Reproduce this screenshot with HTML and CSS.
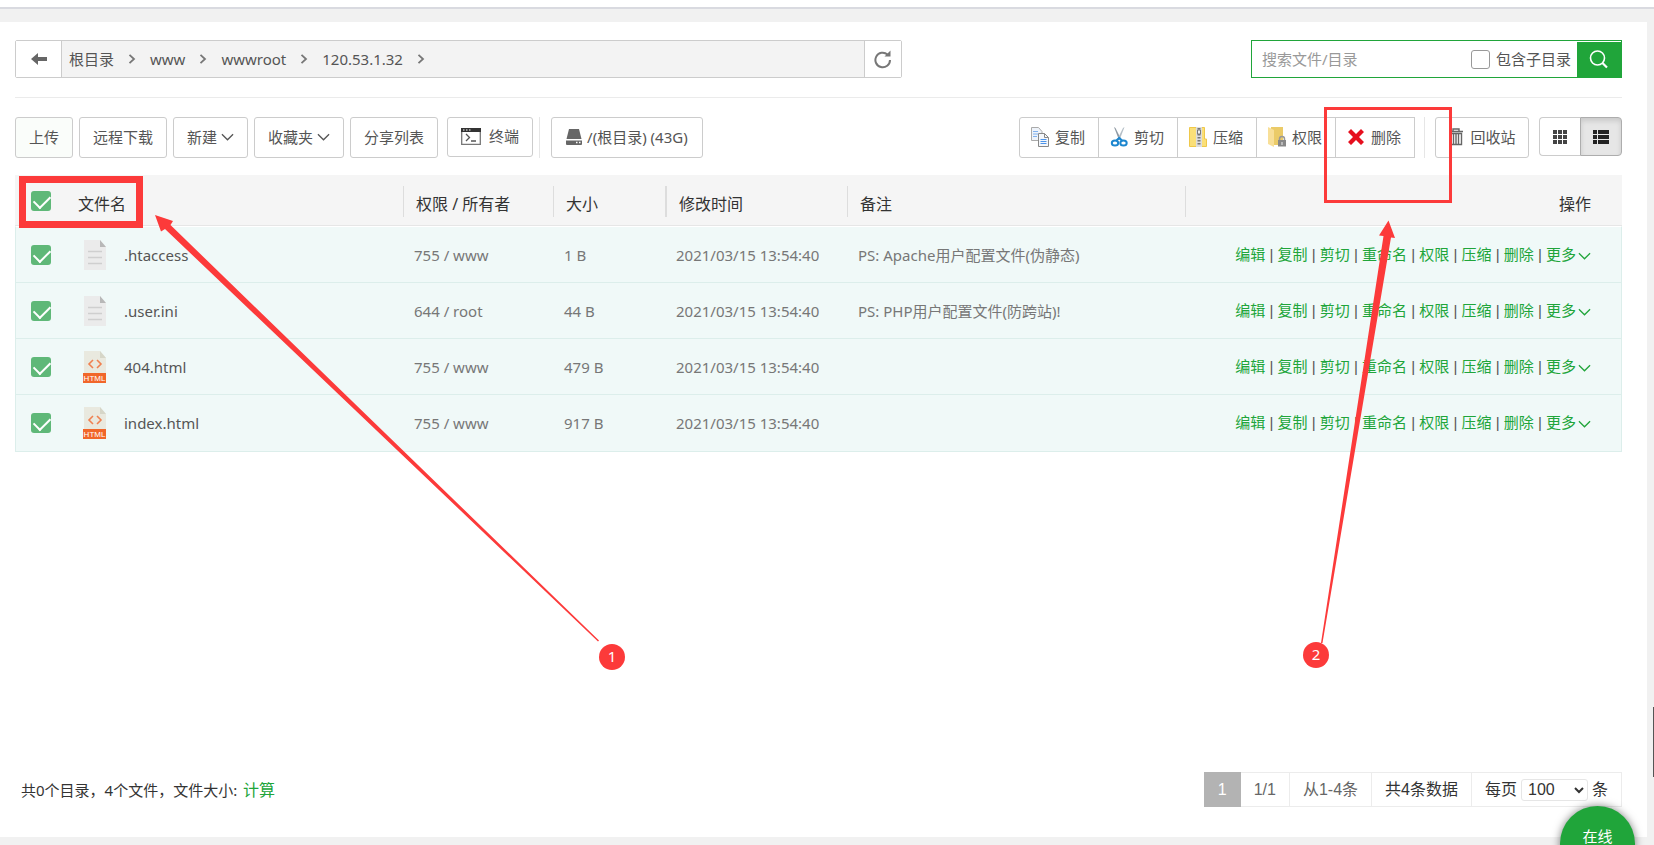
FILE: index.html
```html
<!DOCTYPE html>
<html lang="zh-CN">
<head>
<meta charset="utf-8">
<title>文件管理</title>
<link rel="stylesheet" href="styles.css">
</head>
<body>
<svg class="defs" aria-hidden="true">
  <symbol id="chev" viewBox="0 0 14 8"><path d="M1 1l6 6 6-6" fill="none" stroke="currentColor" stroke-width="1.4"/></symbol>
  <symbol id="sep" viewBox="0 0 8 10"><path d="M1.5 .8L6 5 1.500 9.200" fill="none" stroke="#777" stroke-width="1.8"/></symbol>
  <symbol id="doc" viewBox="0 0 24 32"><path d="M1 1h16l6 7v23H1z" fill="#ebebeb"/><path d="M17 1l6 7h-6z" fill="#b8b8b8"/><path d="M5 12.500h14M5 18.500h14M5 24.500h14" stroke="#cfcfcf" stroke-width="1.600"/></symbol>
  <symbol id="html" viewBox="0 0 24 32"><path d="M1 0h16l6 7v16H1z" fill="#e9e9df"/><path d="M17 0l6 7h-6z" fill="#d6d6c8"/><path d="M10 9l-4 4 4 4M14 9l4 4-4 4" fill="none" stroke="#f08050" stroke-width="1.600"/><path d="M0 22h23v10H0z" fill="#f1662a"/></symbol>
</svg>
<div class="topline"></div>
<main class="panel">
  <div class="pathrow">
    <nav class="crumbs" aria-label="路径">
      <button class="back" aria-label="返回"><svg width="16" height="12" viewBox="0 0 16 12"><path d="M0 6l7-6v4h9v4H7v4z" fill="#666"/></svg></button>
      <div class="trail">
        <a href="#">根目录</a><svg class="sep"><use href="#sep"/></svg>
        <a href="#">www</a><svg class="sep"><use href="#sep"/></svg>
        <a href="#">wwwroot</a><svg class="sep"><use href="#sep"/></svg>
        <a href="#">120.53.1.32</a><svg class="sep"><use href="#sep"/></svg>
      </div>
      <button class="refresh" aria-label="刷新"><svg width="18" height="19" viewBox="0 0 18 19"><path d="M16 10a7.300 7.300 0 1 1-2.500-5.500" fill="none" stroke="#777" stroke-width="2"/><path d="M16.500 .5v6h-6z" fill="#777"/></svg></button>
    </nav>
    <form class="search">
      <input class="query" type="text" placeholder="搜索文件/目录" aria-label="搜索文件/目录">
      <label class="sub"><input class="box" type="checkbox">包含子目录</label>
      <button class="go" type="button" aria-label="搜索"><svg width="20" height="20" viewBox="0 0 20 20"><circle cx="8.500" cy="8" r="7" fill="none" stroke="#fff" stroke-width="1.600"/><path d="M13.500 13l4.500 4.500" stroke="#fff" stroke-width="2.200"/></svg></button>
    </form>
  </div>
  <div class="toolbar">
    <button class="btn up">上传</button>
    <button class="btn">远程下载</button>
    <button class="btn">新建<svg class="chev"><use href="#chev"/></svg></button>
    <button class="btn">收藏夹<svg class="chev"><use href="#chev"/></svg></button>
    <button class="btn">分享列表</button>
    <button class="btn term"><svg width="20" height="17" viewBox="0 0 20 17"><path d="M.7.7h18.600v15.600H.7z" fill="#fff" stroke="#777" stroke-width="1.300"/><path d="M0 0h20v4H0z" fill="#333"/><path d="M2 2h1.500M5 2h1.500M8 2h1.500" stroke="#fff"/><path d="M5 6l3.500 3.500L5 13M10 13h5" fill="none" stroke="#555" stroke-width="1.300"/></svg>终端</button>
    <span class="rule"></span>
    <button class="btn disk"><svg width="16" height="16" viewBox="0 0 16 16"><path d="M3 0h10l2.500 10H.5z" fill="#666"/><path d="M0 11.500h16V15a1 1 0 0 1-1 1H1a1 1 0 0 1-1-1z" fill="#666"/><path d="M10 13.500h1.500M13 13.500h1.500" stroke="#fff" stroke-width="1.500"/></svg>/(根目录) (43G)</button>
    <div class="group">
      <button class="btn"><svg width="20" height="20" viewBox="0 0 20 20"><path d="M1.500.5h7l3.500 4v9H1.500z" fill="#eef3fa" stroke="#aaa"/><path d="M3 4.500h5M3 7h5M3 9.500h4" stroke="#7fb0ee"/><path d="M8.500 6.500h6l4 4v9h-10z" fill="#f4f7fb" stroke="#888"/><path d="M14.500 6.500v4h4" fill="none" stroke="#888"/><path d="M10.500 12.500h6M10.500 14.500h6M10.500 16.500h6" stroke="#4d94ea"/></svg>复制</button>
      <button class="btn"><svg width="20" height="20" viewBox="0 0 20 20"><path d="M5 0l1.500 1L12 12l-2 1z" fill="#8e99a3"/><path d="M15.500 0L14 1 8.500 12l2 1z" fill="#b4bec6"/><ellipse cx="6" cy="16" rx="3.200" ry="2.600" fill="none" stroke="#1c86cf" stroke-width="2"/><ellipse cx="14.500" cy="16" rx="3.200" ry="2.600" fill="none" stroke="#1c86cf" stroke-width="2"/><path d="M7.500 13.500l2.700-2.500 2.800 2.500" fill="none" stroke="#1c86cf" stroke-width="2.200"/></svg>剪切</button>
      <button class="btn"><svg width="20" height="20" viewBox="0 0 20 20"><path d="M1.500.5h15V12h2v7.500h-17z" fill="#fadf78" stroke="#efc84a"/><path d="M8 0h6v20H8z" fill="#ddd"/><path d="M11 1v18" stroke="#777" stroke-width="3" stroke-dasharray="1.500 1.500"/><path d="M9.500 3h3v4h-3z" fill="#eee" stroke="#777"/></svg>压缩</button>
      <button class="btn"><svg width="20" height="20" viewBox="0 0 20 20"><path d="M4 0h12v18H4z" fill="#ebcb68"/><path d="M1 0l6 3v17l-6-3z" fill="#f8df98"/><path d="M12.500 13v-1a2.500 2.500 0 0 1 5 0v1" fill="none" stroke="#999" stroke-width="1.500"/><path d="M11 13h8v6.500h-8z" fill="#888"/><path d="M14.500 15h1v3h-1z" fill="#eee"/></svg>权限</button>
      <button class="btn"><svg width="20" height="20" viewBox="0 0 20 20"><path d="M2 5l3-3 5 5 5-5 3 3-5 5 5 5-3 3-5-5-5 5-3-3 5-5z" fill="#e60f1e"/></svg>删除</button>
    </div>
    <span class="rule far"></span>
    <button class="btn bin"><svg width="16" height="18" viewBox="0 0 16 18"><path d="M1 3.500h14M5 3V1h6v2M2.500 5.500h11v11h-11zM5.500 6v10M8 6v10M10.500 6v10" fill="none" stroke="#666" stroke-width="1.400"/></svg>回收站</button>
    <div class="views">
      <button class="view" aria-label="图标视图"><svg width="14" height="14" viewBox="0 0 14 14"><path d="M0 2h14M0 7h14M0 12h14" stroke="#444" stroke-width="4" stroke-dasharray="4 1"/></svg></button>
      <button class="view on" aria-label="列表视图"><svg width="16" height="14" viewBox="0 0 16 14"><path d="M0 0h4v4H0zM5 0h11v4H5zM0 5h4v4H0zM5 5h11v4H5zM0 10h4v4H0zM5 10h11v4H5z" fill="#222"/></svg></button>
    </div>
  </div>
  <table class="files">
    <colgroup><col class="c-check"><col class="c-name"><col class="c-perm"><col class="c-size"><col class="c-time"><col class="c-note"><col></colgroup>
    <thead><tr>
      <th><input class="tick" type="checkbox" checked aria-label="全选"></th>
      <th class="fname"><span>文件名</span></th><th><span>权限 / 所有者</span></th><th><span>大小</span></th><th class="time"><span>修改时间</span></th><th><span>备注</span></th><th class="ops"><span>操作</span></th>
    </tr></thead>
    <tbody>
    <tr><td><input class="tick" type="checkbox" checked aria-label=".htaccess"></td><td class="name"><div class="file"><svg class="ico"><use href="#doc"/></svg>.htaccess</div></td><td>755 / www</td><td>1 B</td><td>2021/03/15 13:54:40</td><td>PS: Apache用户配置文件(伪静态)</td><td class="ops"><a href="#">编辑</a> | <a href="#">复制</a> | <a href="#">剪切</a> | <a href="#">重命名</a> | <a href="#">权限</a> | <a href="#">压缩</a> | <a href="#">删除</a> | <a href="#">更多<svg class="chev"><use href="#chev"/></svg></a></td></tr>
    <tr><td><input class="tick" type="checkbox" checked aria-label=".user.ini"></td><td class="name"><div class="file"><svg class="ico"><use href="#doc"/></svg>.user.ini</div></td><td>644 / root</td><td>44 B</td><td>2021/03/15 13:54:40</td><td>PS: PHP用户配置文件(防跨站)!</td><td class="ops"><a href="#">编辑</a> | <a href="#">复制</a> | <a href="#">剪切</a> | <a href="#">重命名</a> | <a href="#">权限</a> | <a href="#">压缩</a> | <a href="#">删除</a> | <a href="#">更多<svg class="chev"><use href="#chev"/></svg></a></td></tr>
    <tr><td><input class="tick" type="checkbox" checked aria-label="404.html"></td><td class="name"><div class="file"><svg class="ico" viewBox="0 0 24 32"><use href="#html"/><text class="tag" x="11.500" y="30">HTML</text></svg>404.html</div></td><td>755 / www</td><td>479 B</td><td>2021/03/15 13:54:40</td><td></td><td class="ops"><a href="#">编辑</a> | <a href="#">复制</a> | <a href="#">剪切</a> | <a href="#">重命名</a> | <a href="#">权限</a> | <a href="#">压缩</a> | <a href="#">删除</a> | <a href="#">更多<svg class="chev"><use href="#chev"/></svg></a></td></tr>
    <tr><td><input class="tick" type="checkbox" checked aria-label="index.html"></td><td class="name"><div class="file"><svg class="ico" viewBox="0 0 24 32"><use href="#html"/><text class="tag" x="11.500" y="30">HTML</text></svg>index.html</div></td><td>755 / www</td><td>917 B</td><td>2021/03/15 13:54:40</td><td></td><td class="ops"><a href="#">编辑</a> | <a href="#">复制</a> | <a href="#">剪切</a> | <a href="#">重命名</a> | <a href="#">权限</a> | <a href="#">压缩</a> | <a href="#">删除</a> | <a href="#">更多<svg class="chev"><use href="#chev"/></svg></a></td></tr>
    </tbody>
  </table>
  <footer class="foot">
    <div class="total">共0个目录，4个文件，文件大小: <a href="#">计算</a></div>
    <div class="pager">
      <span class="cur">1</span><span>1/1</span><span>从1-4条</span><span class="dark">共4条数据</span>
      <label class="dark">每页<select class="per"><option>100</option></select>条</label>
    </div>
  </footer>
</main>
<button class="online">在线</button>
<div class="thumb"></div>
<div class="mark m1"></div>
<div class="mark m2"></div>
<svg class="arrows" width="1654" height="845" viewBox="0 0 1654 845" aria-hidden="true"><g fill="#fc3a3a"><path d="M155 215l18 6-2.500 4L599 640.500l-1 1L165 229l-4 2.500z"/><path d="M1388.500 220.500l6.500 17.500-4-.5L1322.500 643h-1.500l62.500-407-4.500-.5z"/></g></svg>
<span class="num n1">1</span>
<span class="num n2">2</span>
</body>
</html>
```

FILE: styles.css
```css
* { box-sizing: border-box; }
body {
  position: relative;
  display: flex;
  flex-direction: column;
  min-height: 100vh;
  margin: 0;
  padding: 0 7px 8px 0;
  overflow: hidden;
  background: #f1f1f1;
  color: #333;
  font: 15px/20px "Noto Sans", "Noto Sans CJK SC", sans-serif;
}
button, input, select { font: inherit; color: inherit; }
button { cursor: pointer; }
a { color: #20a53a; text-decoration: none; }
.defs { position: absolute; width: 0; height: 0; }
.topline { height: 9px; margin: 0 -7px 13px 0; background: #fff; border-bottom: 2px solid #d9dae0; }
.panel { flex: 1; display: flex; flex-direction: column; padding: 18px 25px 30px 15px; background: #fff; }

.pathrow { display: flex; justify-content: space-between; padding-bottom: 19px; border-bottom: 1px solid #ebebeb; }
.crumbs { display: flex; width: 887px; height: 38px; border: 1px solid #ccc; border-radius: 2px; }
.back, .refresh { display: flex; align-items: center; justify-content: center; padding: 0; border: 0; background: #fff; }
.back { width: 46px; border-right: 1px solid #ccc; }
.refresh { width: 37px; border-left: 1px solid #ccc; }
.trail { flex: 1; display: flex; align-items: center; gap: 14px; padding-left: 7px; background: #f3f3f3; }
.trail a { color: #555; }
.sep { width: 8px; height: 10px; }
.search { display: flex; width: 371px; height: 38px; border: 1px solid #20a53a; }
.query { flex: 1; min-width: 0; padding: 0 10px; border: 0; background: none; outline: 0; }
.query::placeholder { color: #999; }
.sub { display: flex; align-items: center; gap: 6px; padding-right: 6px; color: #555; }
.box { appearance: none; width: 19px; height: 19px; margin: 0; border: 1px solid #999; border-radius: 3px; }
.go { width: 44px; margin-top: 1px; padding: 0; border: 0; background: #20a53a; }
.go svg { display: block; margin: auto; }

.toolbar { display: flex; gap: 6px; padding: 19px 0 17px; }
.btn { display: flex; align-items: center; justify-content: center; height: 41px; padding: 0 13px 2px; border: 1px solid #ccc; border-radius: 3px; background: #fff; color: #555; white-space: nowrap; }
.up { background: #fafdfa; }
.chev { width: 13px; height: 8px; margin-left: 2px; }
.btn .chev { margin-left: 4px; }
.term { gap: 8px; height: 40px; margin-left: 3px; }
.rule { width: 1px; height: 41px; background: #e6e6e6; }
.disk { gap: 5px; margin-left: 5px; padding: 0 14px 2px; }
.group { display: flex; margin-left: auto; }
.group .btn { gap: 5px; width: 80px; margin-right: -1px; padding: 0 3px 2px 0; border-radius: 0; }
.group .btn:first-child { border-radius: 3px 0 0 3px; }
.rule.far { margin: 0 4px; }
.bin { gap: 6px; width: 94px; padding: 0 0 2px; }
.views { display: flex; height: 39px; margin-left: 4px; }
.view { display: flex; align-items: center; justify-content: center; width: 41px; padding: 0; border: 1px solid #ccc; border-right: 0; border-radius: 4px 0 0 4px; background: #fff; }
.view.on { width: 42px; border: 1px solid #adadad; border-radius: 0 4px 4px 0; background: #e6e6e6; box-shadow: inset 0 3px 5px rgba(0, 0, 0, .125); }

.files { width: 100%; table-layout: fixed; border-collapse: separate; border-spacing: 0; }
.c-check { width: 50px; }
.c-name { width: 338px; }
.c-perm { width: 150px; }
.c-size { width: 112px; }
.c-time { width: 182px; }
.c-note { width: 338px; }
th, td { padding: 0; text-align: left; white-space: nowrap; }
th { height: 51px; padding-top: 2px; background: #f5f5f5; border-bottom: 1px solid #e6e6e6; font-size: 16px; font-weight: 400; }
th span { display: block; padding: 8px 0 3px 12px; border-left: 1px solid #ddd; }
th.time span { border-left-width: 2px; }
th.fname span { padding-left: 13px; border-left: 0; }
th.ops span { padding-right: 31px; }
td { height: 56px; padding-left: 11px; background: #f0f9f8; border-bottom: 1px solid #dceeeb; color: #777; }
tbody tr:first-child td { height: 57px; border-top: 1px solid #fff; }
tbody tr:last-child td { height: 57px; }
th:first-child { padding-left: 16px; }
td:first-child { padding-left: 15px; border-left: 1px solid #dceeeb; }
td:last-child { padding-right: 30px; border-right: 1px solid #dceeeb; }
.ops { text-align: right; }
td.ops { color: #555; font-family: "Liberation Sans", "Noto Sans CJK SC", sans-serif; }
td.name { padding-left: 18px; color: #555; }
.file { display: flex; align-items: center; gap: 17px; }
.ico { width: 24px; height: 32px; }
.tag { fill: #fff; font: 8px "Liberation Sans", sans-serif; text-anchor: middle; }
.tick { display: block; appearance: none; width: 20px; height: 20px; margin: 0; padding: 4px 3px; border-radius: 3px; background: #5fb878; }
.tick::before { content: ""; display: block; width: 14px; height: 8px; border: solid #fff; border-width: 0 0 2px 2px; rotate: -45deg; }

.foot { display: flex; align-items: center; justify-content: space-between; margin-top: auto; }
.total { padding-left: 6px; }
.total a { margin-left: 2px; font-size: 16px; }
.pager { display: flex; height: 35px; border: 1px solid #ececec; border-left: 0; font: 16px/33px "Liberation Sans", "Noto Sans CJK SC", sans-serif; color: #666; }
.pager > * { padding: 0 13px; border-right: 1px solid #ececec; }
.pager > :last-child { border-right: 0; }
.pager .cur { margin: -1px 0; padding: 1px 14px; border: 0; background: #b3b3b3; color: #fff; }
.pager .dark { color: #333; }
.per { width: 67px; height: 22px; margin: 0 4px; padding: 0 0 0 2px; border: 1px solid #e6e6e6; border-radius: 3px; background: #fff; }

.online { position: absolute; right: 19px; bottom: -36px; width: 75px; height: 75px; padding: 20px 0 0; border: 0; border-radius: 50%; background: #20a53a; box-shadow: 0 0 8px rgba(0, 0, 0, .5); color: #fff; line-height: 20px; display: flex; justify-content: center; }
.thumb { position: absolute; right: 0; top: 707px; width: 1px; height: 70px; background: #555; }
.mark { position: absolute; border: 3px solid #fc3a3a; }
.m1 { left: 19px; top: 176px; width: 124px; height: 52px; border-width: 7px; }
.m2 { left: 1324px; top: 107px; width: 128px; height: 96px; }
.arrows { position: absolute; left: 0; top: 0; pointer-events: none; }
.num { position: absolute; width: 26px; height: 26px; border-radius: 50%; background: #fc3a3a; color: #fff; line-height: 24px; text-align: center; }
.n1 { left: 599px; top: 644px; }
.n2 { left: 1303px; top: 642px; }
```
